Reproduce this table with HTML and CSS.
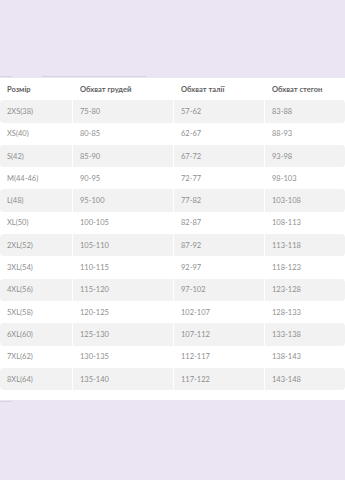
FILE: index.html
```html
<!DOCTYPE html>
<html lang="uk">
<head>
<meta charset="utf-8">
<link rel="stylesheet" href="styles.css">
</head>
<body>
<div class="top"><span class="ghost ghost-a"></span><span class="ghost ghost-b"></span></div>
<div class="sheet">
  <table class="sizes">
    <thead>
      <tr><th>Розмір</th><th>Обхват грудей</th><th>Обхват талії</th><th>Обхват стегон</th></tr>
    </thead>
    <tbody>
      <tr class="alt"><td>2XS(38)</td><td>75-80</td><td>57-62</td><td>83-88</td></tr>
      <tr><td>XS(40)</td><td>80-85</td><td>62-67</td><td>88-93</td></tr>
      <tr class="alt"><td>S(42)</td><td>85-90</td><td>67-72</td><td>93-98</td></tr>
      <tr><td>M(44-46)</td><td>90-95</td><td>72-77</td><td>98-103</td></tr>
      <tr class="alt"><td>L(48)</td><td>95-100</td><td>77-82</td><td>103-108</td></tr>
      <tr><td>XL(50)</td><td>100-105</td><td>82-87</td><td>108-113</td></tr>
      <tr class="alt"><td>2XL(52)</td><td>105-110</td><td>87-92</td><td>113-118</td></tr>
      <tr><td>3XL(54)</td><td>110-115</td><td>92-97</td><td>118-123</td></tr>
      <tr class="alt"><td>4XL(56)</td><td>115-120</td><td>97-102</td><td>123-128</td></tr>
      <tr><td>5XL(58)</td><td>120-125</td><td>102-107</td><td>128-133</td></tr>
      <tr class="alt"><td>6XL(60)</td><td>125-130</td><td>107-112</td><td>133-138</td></tr>
      <tr><td>7XL(62)</td><td>130-135</td><td>112-117</td><td>138-143</td></tr>
      <tr class="alt"><td>8XL(64)</td><td>135-140</td><td>117-122</td><td>143-148</td></tr>
    </tbody>
  </table>
</div>
<div class="bottom"><span class="ghost ghost-c"></span></div>
</body>
</html>
```
FILE: styles.css
```css
* { box-sizing: border-box; }
html, body { margin: 0; padding: 0; }
body {
  width: 345px;
  height: 480px;
  background: #ebe5f3;
  font-family: Lato, "Open Sans", sans-serif;
  overflow: hidden;
}
.top {
  height: 78px;
  display: flex;
  align-items: flex-end;
  gap: 30px;
  padding-bottom: 1px;
}
.ghost {
  display: block;
  height: 1px;
  background: #d9d2e0;
}
.ghost-a { width: 12px; }
.ghost-b { width: 104px; }
.sheet {
  background: #fff;
  padding: 0 0 10px;
}
.sizes {
  width: 345px;
  border-collapse: separate;
  border-spacing: 0;
  table-layout: fixed;
}
.sizes th, .sizes td {
  height: 22.3px;
  padding: 0 0 0 7px;
  text-align: left;
  font-size: 7.5px;
  white-space: nowrap;
  vertical-align: middle;
}
.sizes th {
  color: #5e5e5e;
  font-weight: 700;
}
.sizes td { color: #8e8e8e; }
.sizes th:nth-child(1) { width: 72px; }
.sizes th:nth-child(2) { width: 101px; }
.sizes th:nth-child(3) { width: 91px; }
.sizes th:nth-child(4) { width: 81px; }
.sizes th:nth-child(n+2), .sizes td:nth-child(n+2) { border-left: 1px solid #fff; }
.sizes tr.alt td { background: #f2f2f2; }
.sizes tr.alt td:first-child { border-radius: 4px 0 0 4px; }
.sizes tr.alt td:last-child { border-radius: 0 4px 4px 0; }
.bottom {
  height: 80px;
  padding-top: 1px;
}
.ghost-c { width: 12px; }
```
